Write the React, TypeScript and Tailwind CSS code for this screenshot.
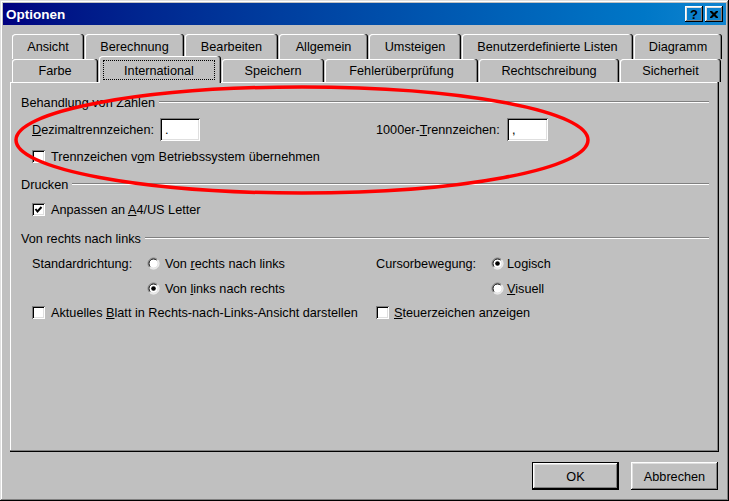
import React from 'react';

const raised =
  'shadow-[inset_-1px_-1px_#000,inset_1px_1px_#fff,inset_-2px_-2px_#808080,inset_2px_2px_#dfdfdf]';
const sunken =
  'shadow-[inset_1px_1px_#808080,inset_-1px_-1px_#fff,inset_2px_2px_#000,inset_-2px_-2px_#dfdfdf]';

const row1 = [
  { label: 'Ansicht', w: 'w-[72px]' },
  { label: 'Berechnung', w: 'w-[99px]' },
  { label: 'Bearbeiten', w: 'w-[93px]' },
  { label: 'Allgemein', w: 'w-[89px]' },
  { label: 'Umsteigen', w: 'w-[92px]' },
  { label: 'Benutzerdefinierte Listen', w: 'w-[171px]' },
  { label: 'Diagramm', w: 'w-[88px]' },
];

const row2 = [
  { label: 'Farbe', w: 'w-[86px]' },
  { label: 'International', w: 'w-[122px]', active: true },
  { label: 'Speichern', w: 'w-[102px]' },
  { label: 'Fehlerüberprüfung', w: 'w-[153px]' },
  { label: 'Rechtschreibung', w: 'w-[140px]' },
  { label: 'Sicherheit', w: 'w-[101px]' },
];

const tabShadow =
  'shadow-[inset_-1px_0_#000,inset_-2px_0_#808080,inset_1px_1px_#fff]';

// text in Liberation Sans sits a bit high, pt nudges it down
const T = ({ children, className = '' }: { children?: React.ReactNode; className?: string }) => (
  <span className={`pt-[3px] ${className}`}>{children}</span>
);

function Tab({ label, w, h }: { label: string; w: string; h: string }) {
  return (
    <div className={`${w} ${h} ${tabShadow} rounded-t-[3px] pt-[3px] flex items-center justify-center`}>
      {label}
    </div>
  );
}

function Check({ checked }: { checked?: boolean }) {
  return (
    <span className={`w-[13px] h-[13px] bg-white shrink-0 ${sunken} flex items-center justify-center`}>
      {checked && (
        <svg width="13" height="13" viewBox="0 0 13 13">
          <polyline points="3.5,6 5.5,8.5 9.5,4" fill="none" stroke="#000" strokeWidth="2" />
        </svg>
      )}
    </span>
  );
}

function Radio({ checked }: { checked?: boolean }) {
  return (
    <svg width="13" height="13" viewBox="0 0 13 13" className="shrink-0">
      <circle cx="6.5" cy="6.5" r="5" fill="#fff" />
      <path d="M2.6 10.4 A5.5 5.5 0 0 1 10.4 2.6" fill="none" stroke="#808080" strokeWidth="1" />
      <path d="M10.4 2.6 A5.5 5.5 0 0 1 2.6 10.4" fill="none" stroke="#fff" strokeWidth="1" />
      <path d="M3.3 9.7 A4.5 4.5 0 0 1 9.7 3.3" fill="none" stroke="#000" strokeWidth="1" />
      <path d="M9.7 3.3 A4.5 4.5 0 0 1 3.3 9.7" fill="none" stroke="#dfdfdf" strokeWidth="1" />
      {checked && <circle cx="6.5" cy="6.5" r="2.3" fill="#000" />}
    </svg>
  );
}

function Field({ value, w }: { value: string; w: string }) {
  return (
    <span className={`${w} h-[23px] bg-white ${sunken} pl-[5px] pt-[3px] flex items-center`}>{value}</span>
  );
}

function Group({ title, mt }: { title: string; mt: string }) {
  return (
    <div className={`${mt} h-[18px] flex items-center gap-[4px]`}>
      <T>{title}</T>
      <span className="flex-1 border-t border-t-[#808080] border-b border-b-white" />
    </div>
  );
}

const U = ({ children }: { children: React.ReactNode }) => <u className="underline">{children}</u>;

export default function App() {
  return (
    <div
      className={`relative w-[729px] h-[501px] bg-[#c0c0c0] p-[3px] text-black text-[12.7px] font-['Liberation_Sans',Arial,sans-serif] shadow-[inset_-1px_-1px_#000,inset_1px_1px_#dfdfdf,inset_-2px_-2px_#808080,inset_2px_2px_#fff] flex flex-col`}
    >
      {/* title bar */}
      <div className="h-[22px] bg-linear-to-r from-[#000080] to-[#1084d0] flex items-center pl-[3px] pr-[3px]">
        <T className="flex-1 text-white font-bold text-[13.5px]">Optionen</T>
        <div className="flex gap-[2px]">
          <span className={`w-[18px] h-[16px] ${raised} flex items-center justify-center font-bold text-[13px] leading-none`}>?</span>
          <span className={`w-[18px] h-[16px] ${raised} flex items-center justify-center`}>
            <svg width="8" height="7" viewBox="0 0 8 7">
              <path d="M0 0h2l2 2l2-2h2v1l-2.5 2.5l2.5 2.5v1h-2l-2-2l-2 2h-2v-1l2.5-2.5l-2.5-2.5z" fill="#000" />
            </svg>
          </span>
        </div>
      </div>

      {/* tabs */}
      <div className="mt-[9px] ml-[9px] flex gap-[1px]">
        {row1.map((t) => (
          <Tab key={t.label} label={t.label} w={t.w} h="h-[25px]" />
        ))}
      </div>
      <div className="ml-[9px] -mt-[1px] h-[24px] flex items-end gap-[1px] relative z-10">
        {row2.map((t) =>
          t.active ? (
            <div
              key={t.label}
              className={`${t.w} h-[27px] -mb-[1px] bg-[#c0c0c0] ${tabShadow} rounded-t-[3px] flex pt-[4px] pl-[4px] pr-[6px] pb-[3px]`}
            >
              <div className="flex-1 border border-dotted border-black pt-[3px] flex items-center justify-center">
                {t.label}
              </div>
            </div>
          ) : (
            <div key={t.label} className="bg-[#c0c0c0]">
              <Tab label={t.label} w={t.w} h="h-[23px]" />
            </div>
          )
        )}
      </div>

      {/* panel */}
      <div className="ml-[7px] w-[709px] h-[370px] shadow-[inset_-1px_-1px_#000,inset_-2px_-2px_#808080,inset_1px_1px_#fff] pt-[11px] pl-[11px] pr-[10px] flex flex-col">
        <Group title="Behandlung von Zahlen" mt="mt-0" />
        <div className="mt-[7px] h-[23px] pl-[11px] flex items-center">
          <div className="w-[344px] flex items-center">
            <T className="w-[128px]">
              <U>D</U>ezimaltrennzeichen:
            </T>
            <Field value="." w="w-[40px]" />
          </div>
          <div className="flex items-center">
            <T className="w-[131px]">
              1000er-<U>T</U>rennzeichen:
            </T>
            <Field value="," w="w-[41px]" />
          </div>
        </div>
        <div className="mt-[7px] h-[16px] pl-[11px] flex items-center gap-[6px]">
          <Check />
          <T>
            Trennzeichen v<U>o</U>m Betriebssystem übernehmen
          </T>
        </div>

        <Group title="Drucken" mt="mt-[11px]" />
        <div className="mt-[8px] h-[16px] pl-[11px] flex items-center gap-[6px]">
          <Check checked />
          <T>
            Anpassen an <U>A</U>4/US Letter
          </T>
        </div>

        <Group title="Von rechts nach links" mt="mt-[12px]" />
        <div className="mt-[7px] h-[18px] pl-[11px] flex items-center">
          <div className="w-[344px] flex items-center">
            <T className="w-[115px]">Standardrichtung:</T>
            <Radio />
            <T className="ml-[5px]">
              Von <U>r</U>echts nach links
            </T>
          </div>
          <div className="flex items-center">
            <T className="w-[115px]">Cursorbewegung:</T>
            <Radio checked />
            <T className="ml-[3px]">
              Lo<U>g</U>isch
            </T>
          </div>
        </div>
        <div className="mt-[7px] h-[18px] pl-[11px] flex items-center">
          <div className="w-[344px] flex items-center">
            <span className="w-[115px]" />
            <Radio checked />
            <T className="ml-[5px]">
              Von <U>l</U>inks nach rechts
            </T>
          </div>
          <div className="flex items-center">
            <span className="w-[115px]" />
            <Radio />
            <T className="ml-[3px]">
              <U>V</U>isuell
            </T>
          </div>
        </div>
        <div className="mt-[6px] h-[18px] pl-[11px] flex items-center">
          <div className="w-[344px] flex items-center gap-[6px]">
            <Check />
            <T>
              Aktuelles <U>B</U>latt in Rechts-nach-Links-Ansicht darstellen
            </T>
          </div>
          <div className="flex items-center gap-[5px]">
            <Check />
            <T>
              <U>S</U>teuerzeichen anzeigen
            </T>
          </div>
        </div>
      </div>

      {/* buttons */}
      <div className="mt-[10px] pr-[8px] flex justify-end gap-[12px]">
        <div className="w-[87px] h-[28px] border border-black">
          <div className={`w-full h-full ${raised} pt-[3px] flex items-center justify-center`}>OK</div>
        </div>
        <div className={`w-[87px] h-[28px] ${raised} pt-[3px] flex items-center justify-center`}>Abbrechen</div>
      </div>

      {/* red annotation */}
      <svg className="absolute left-0 top-0 pointer-events-none" width="729" height="501">
        <ellipse cx="302" cy="140" rx="286" ry="53" fill="none" stroke="#ff0000" strokeWidth="3.5" />
      </svg>
    </div>
  );
}
